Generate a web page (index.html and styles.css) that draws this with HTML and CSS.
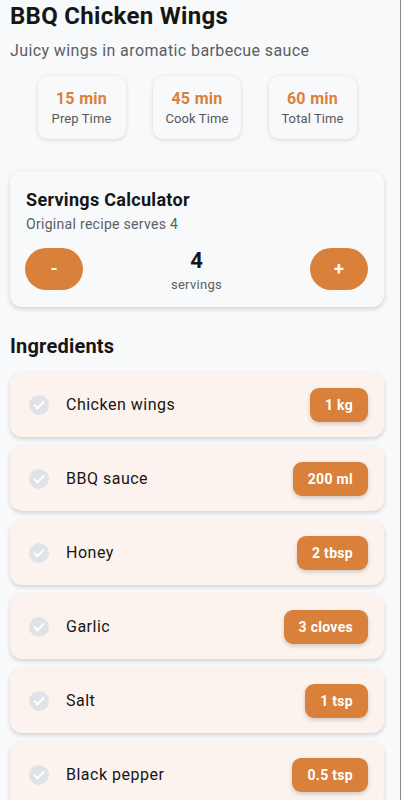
FILE: index.html
```html
<!DOCTYPE html>
<html lang="en">

<head>
    <meta charset="UTF-8" />
    <meta name="viewport" content="width=device-width, initial-scale=1.0" />
    <title>BBQ Chicken Wings</title>
    <link rel="stylesheet" href="styles.css">
</head>

<body>
    <div class="page">
        <h1>BBQ Chicken Wings</h1>
        <p class="subtitle">Juicy wings in aromatic barbecue sauce</p>

        <div class="times">
            <div class="time-card">
                <div class="time-value">15 min</div>
                <div class="time-label">Prep Time</div>
            </div>
            <div class="time-card">
                <div class="time-value">45 min</div>
                <div class="time-label">Cook Time</div>
            </div>
            <div class="time-card">
                <div class="time-value">60 min</div>
                <div class="time-label">Total Time</div>
            </div>
        </div>

        <div class="servings-card">
            <h2>Servings Calculator</h2>
            <p class="servings-note">Original recipe serves 4</p>
            <div class="servings-row">
                <button class="round-btn">-</button>
                <div class="servings-count">
                    <div class="count">4</div>
                    <div class="count-label">servings</div>
                </div>
                <button class="round-btn">+</button>
            </div>
        </div>

        <h3>Ingredients</h3>
        <div class="ingredients" id="ingredients"></div>
    </div>

    <script>
        const ingredients = [
            ['Chicken wings', '1 kg'],
            ['BBQ sauce', '200 ml'],
            ['Honey', '2 tbsp'],
            ['Garlic', '3 cloves'],
            ['Salt', '1 tsp'],
            ['Black pepper', '0.5 tsp'],
            ['Paprika', '1 tsp']
        ];

        const list = document.getElementById('ingredients');
        ingredients.forEach(([name, amount]) => {
            const row = document.createElement('div');
            row.className = 'ingredient';
            row.innerHTML =
                '<span class="check"><svg viewBox="0 0 20 20"><path d="M5.5 10.2l3 3 6-6.2" /></svg></span>' +
                '<span class="name">' + name + '</span>' +
                '<span class="amount">' + amount + '</span>';
            list.appendChild(row);
        });
    </script>
</body>

</html>
```

FILE: styles.css
```css
html,
body {
    margin: 0;
    padding: 0;
    background: #f8f9fb;
    font-family: Roboto, 'Noto Sans', sans-serif;
    color: #161616;
}

body {
    width: 400px;
    min-height: 100vh;
    border-right: 1px solid #8a8a8a;
}

.page {
    padding: 2px 16px 0 10px;
}

h1 {
    font-size: 24px;
    font-weight: 700;
    letter-spacing: 0.3px;
    margin: 0;
    line-height: 28px;
}

.subtitle {
    margin: 11px 0 0;
    font-size: 16px;
    line-height: 20px;
    color: #5b5e63;
    letter-spacing: 0.4px;
}

.times {
    display: flex;
    justify-content: space-evenly;
    margin-top: 15px;
}

.time-card {
    width: 88px;
    height: 63px;
    box-sizing: border-box;
    border-radius: 10px;
    background: #f8f9fb;
    box-shadow: 0 1px 4px rgba(0, 0, 0, 0.14);
    display: flex;
    flex-direction: column;
    align-items: center;
    justify-content: center;
}

.time-value {
    color: #d9803a;
    font-weight: 700;
    font-size: 16px;
    letter-spacing: 0.3px;
}

.time-label {
    font-size: 13px;
    color: #55585d;
    margin-top: 3px;
    letter-spacing: 0.1px;
}

.servings-card {
    margin-top: 32px;
    background: #f8f9fb;
    border-radius: 12px;
    box-shadow: 0 2px 5px rgba(0, 0, 0, 0.16);
    padding: 18px 16px 15px 15px;
}

h2 {
    margin: 0 0 0 1px;
    font-size: 18px;
    font-weight: 700;
    letter-spacing: 0.3px;
}

.servings-note {
    margin: 6px 0 0 1px;
    font-size: 14px;
    color: #5b5e63;
    letter-spacing: 0.3px;
}

.servings-row {
    display: flex;
    align-items: center;
    justify-content: space-between;
    margin-top: 13px;
}

.round-btn {
    width: 58px;
    height: 42px;
    border: none;
    border-radius: 21px;
    background: #d9803a;
    color: white;
    font-family: inherit;
    font-size: 18px;
    font-weight: 700;
    padding: 0;
}

.servings-count {
    text-align: center;
}

.count {
    font-size: 22px;
    font-weight: 700;
    line-height: 32px;
}

.count-label {
    font-size: 13px;
    line-height: 15px;
    color: #5b5e63;
    letter-spacing: 0.3px;
}

h3 {
    margin: 27px 0 0;
    font-size: 20px;
    font-weight: 700;
    letter-spacing: 0.2px;
}

.ingredients {
    display: flex;
    flex-direction: column;
    gap: 9px;
    margin-top: 14px;
}

.ingredient {
    height: 65px;
    box-sizing: border-box;
    background: #fcf3ee;
    border-radius: 12px;
    box-shadow: 0 2px 4px rgba(0, 0, 0, 0.16);
    display: flex;
    align-items: center;
    padding: 0 16px 0 19px;
}

.check {
    width: 20px;
    height: 20px;
    border-radius: 50%;
    background: #dfe3e8;
    display: flex;
    align-items: center;
    justify-content: center;
    flex-shrink: 0;
}

.check svg {
    width: 20px;
    height: 20px;
    fill: none;
    stroke: white;
    stroke-width: 2;
    stroke-linecap: round;
    stroke-linejoin: round;
}

.name {
    flex: 1;
    margin-left: 17px;
    font-size: 16px;
    letter-spacing: 0.5px;
}

.amount {
    background: #d9803a;
    color: white;
    font-weight: 700;
    font-size: 14px;
    letter-spacing: 0.3px;
    height: 34px;
    line-height: 34px;
    padding: 0 15px;
    border-radius: 9px;
    box-shadow: 0 2px 4px rgba(0, 0, 0, 0.18);
}
```
